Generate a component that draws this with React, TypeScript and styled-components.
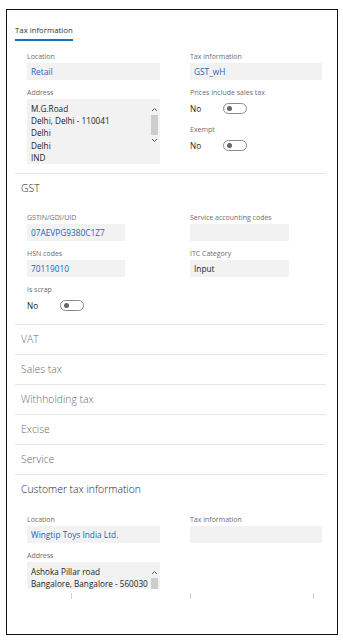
import React from "react";
import styled, { createGlobalStyle } from "styled-components";

const GlobalStyle = createGlobalStyle`
  html, body {
    margin: 0;
    padding: 0;
    background: #fff;
    font-family: "Open Sans", "Noto Sans", sans-serif;
  }
`;

const BLUE = "#2166b4";

const Frame = styled.div`
  box-sizing: border-box;
  margin: 9px 0 0 6px;
  width: 332px;
  height: 626px;
  border: 1px solid #111;
  overflow: hidden;
  background: #fff;
`;

const TabBar = styled.div`
  display: flex;
  padding: 14px 0 0 8px;
`;

const Tab = styled.div`
  font-size: 7.8px;
  line-height: 12px;
  color: #333;
  padding-bottom: 3px;
  border-bottom: 2px solid #1e6fc2;
`;

const Body = styled.div<{ $top?: number; $bottom?: number }>`
  display: grid;
  grid-template-columns: 133px 132px;
  column-gap: 30px;
  padding: ${(p) => p.$top ?? 9}px 0 ${(p) => p.$bottom ?? 9}px 20px;
  align-items: start;
`;

const Column = styled.div`
  display: flex;
  flex-direction: column;
  gap: 7px;
`;

const Field = styled.div<{ $w?: number }>`
  display: flex;
  flex-direction: column;
  width: ${(p) => (p.$w ? `${p.$w}px` : "100%")};
`;

const Label = styled.div`
  font-size: 7px;
  line-height: 12px;
  color: #6e6e6e;
  white-space: nowrap;
`;

const Box = styled.div<{ $link?: boolean }>`
  box-sizing: border-box;
  height: 17px;
  background: #f2f2f2;
  padding: 0 4px;
  font-size: 8.3px;
  line-height: 17px;
  color: ${(p) => (p.$link ? BLUE : "#222")};
  white-space: nowrap;
  overflow: hidden;
`;

const AddressBox = styled.div<{ $h: number }>`
  position: relative;
  box-sizing: border-box;
  height: ${(p) => p.$h}px;
  background: #f2f2f2;
  padding: 4px 4px 0;
  overflow: hidden;
`;

const AddressLine = styled.div`
  font-size: 8.2px;
  line-height: 12.2px;
  color: #222;
  white-space: nowrap;
`;

const Scroll = styled.div`
  position: absolute;
  top: 8px;
  right: 2px;
  width: 8px;
  display: flex;
  flex-direction: column;
  align-items: center;
  gap: 3px;
`;

const Thumb = styled.div`
  width: 7px;
  height: 20px;
  background: #cdcdcd;
`;

const ToggleRow = styled.div`
  display: flex;
  align-items: center;
  height: 18px;
  gap: 18px;
`;

const ToggleText = styled.span`
  font-size: 8.2px;
  color: #222;
  width: 15px;
`;

const Toggle = styled.div`
  box-sizing: border-box;
  width: 24px;
  height: 11px;
  border: 1px solid #8a8a8a;
  border-radius: 6px;
  display: flex;
  align-items: center;
  padding-left: 3px;
  &::before {
    content: "";
    width: 5px;
    height: 5px;
    border-radius: 50%;
    background: #666;
  }
`;

const Section = styled.div`
  margin: 0 11px 0 8px;
  border-top: 1px solid #e6e6e6;
`;

const SectionHead = styled.div<{ $open?: boolean }>`
  height: 29px;
  line-height: 29px;
  padding-left: 6px;
  font-size: 10.4px;
  font-weight: 300;
  color: ${(p) => (p.$open ? "#222" : "#6a6a6a")};
`;

const SectionBody = styled(Body)`
  padding-left: 12px;
`;

const Ticks = styled.div`
  display: flex;
  padding-left: 56px;
  height: 6px;
  margin-top: 4px;
`;

const Tick = styled.div<{ $gap: number }>`
  width: 1px;
  height: 6px;
  background: #cfcfcf;
  margin-left: ${(p) => p.$gap}px;
`;

const Chevron = ({ up }: { up?: boolean }) => (
  <svg width="7" height="5" viewBox="0 0 7 5">
    <path
      d={up ? "M1 4 L3.5 1.5 L6 4" : "M1 1 L3.5 3.5 L6 1"}
      fill="none"
      stroke="#555"
      strokeWidth="1"
    />
  </svg>
);

const YesNo = () => (
  <ToggleRow>
    <ToggleText>No</ToggleText>
    <Toggle />
  </ToggleRow>
);

const collapsed = ["VAT", "Sales tax", "Withholding tax", "Excise", "Service"];

export default function App() {
  return (
    <>
      <GlobalStyle />
      <Frame>
        <TabBar>
          <Tab>Tax information</Tab>
        </TabBar>
        <Body $top={10} $bottom={9}>
          <Column>
            <Field>
              <Label>Location</Label>
              <Box $link>Retail</Box>
            </Field>
            <Field>
              <Label>Address</Label>
              <AddressBox $h={65}>
                <AddressLine>M.G.Road</AddressLine>
                <AddressLine>Delhi, Delhi - 110041</AddressLine>
                <AddressLine>Delhi</AddressLine>
                <AddressLine>Delhi</AddressLine>
                <AddressLine>IND</AddressLine>
                <Scroll>
                  <Chevron up />
                  <Thumb />
                  <Chevron />
                </Scroll>
              </AddressBox>
            </Field>
          </Column>
          <Column>
            <Field>
              <Label>Tax information</Label>
              <Box $link>GST_wH</Box>
            </Field>
            <Field>
              <Label>Prices include sales tax</Label>
              <YesNo />
            </Field>
            <Field>
              <Label>Exempt</Label>
              <YesNo />
            </Field>
          </Column>
        </Body>

        <Section>
          <SectionHead $open>GST</SectionHead>
          <SectionBody $top={9} $bottom={10}>
            <Column>
              <Field $w={98}>
                <Label>GSTIN/GDI/UID</Label>
                <Box $link>07AEVPG9380C1Z7</Box>
              </Field>
              <Field $w={98}>
                <Label>HSN codes</Label>
                <Box $link>70119010</Box>
              </Field>
              <Field>
                <Label>Is scrap</Label>
                <YesNo />
              </Field>
            </Column>
            <Column>
              <Field $w={99}>
                <Label>Service accounting codes</Label>
                <Box />
              </Field>
              <Field $w={99}>
                <Label>ITC Category</Label>
                <Box>Input</Box>
              </Field>
            </Column>
          </SectionBody>
        </Section>

        {collapsed.map((name) => (
          <Section key={name}>
            <SectionHead>{name}</SectionHead>
          </Section>
        ))}

        <Section>
          <SectionHead $open>Customer tax information</SectionHead>
          <SectionBody $top={10} $bottom={0}>
            <Column>
              <Field>
                <Label>Location</Label>
                <Box $link>Wingtip Toys India Ltd.</Box>
              </Field>
              <Field>
                <Label>Address</Label>
                <AddressBox $h={27}>
                  <AddressLine>Ashoka Pillar road</AddressLine>
                  <AddressLine>Bangalore, Bangalore - 560030</AddressLine>
                  <Scroll>
                    <Chevron up />
                    <Thumb />
                  </Scroll>
                </AddressBox>
              </Field>
            </Column>
            <Column>
              <Field>
                <Label>Tax information</Label>
                <Box />
              </Field>
            </Column>
          </SectionBody>
          <Ticks>
            <Tick $gap={0} />
            <Tick $gap={118} />
            <Tick $gap={122} />
          </Ticks>
        </Section>
      </Frame>
    </>
  );
}
